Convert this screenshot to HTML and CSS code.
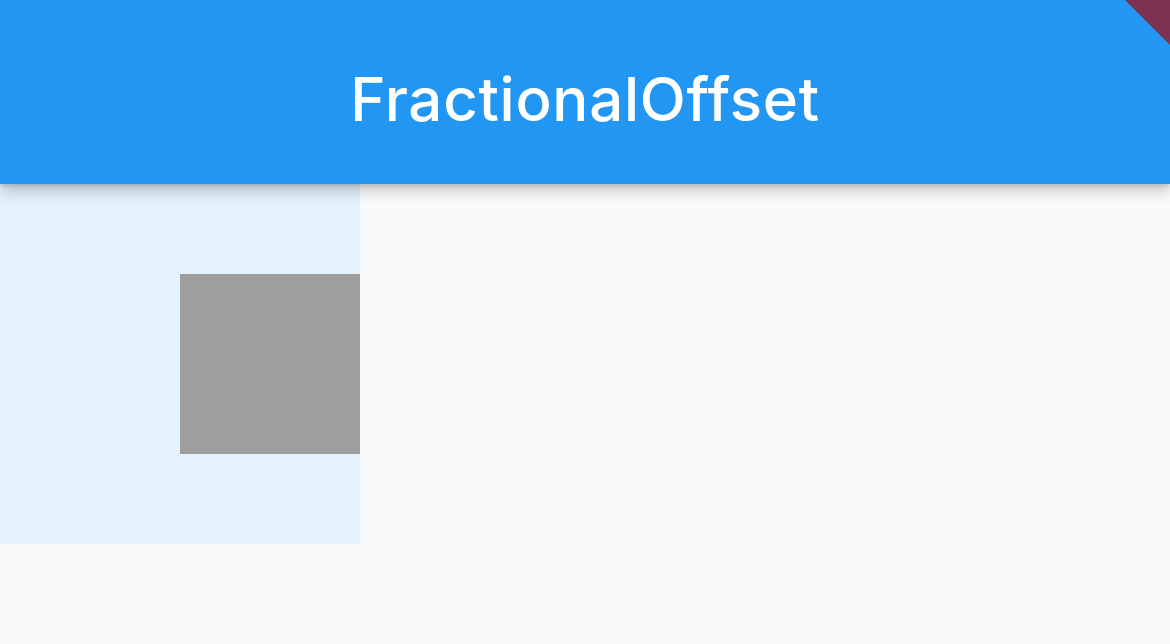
FILE: index.html
```html
<!DOCTYPE html>
<html>
<head>
<meta charset="utf-8">
<link rel="stylesheet" href="styles.css">
</head>
<body>
<header class="app-bar">
  <h1 class="title">FractionalOffset</h1>
</header>
<main class="content">
  <div class="frame">
    <div class="square"></div>
  </div>
</main>
<div class="debug-banner"></div>
</body>
</html>
```

FILE: styles.css
```css
html, body {
  margin: 0;
  padding: 0;
}
body {
  width: 1170px;
  height: 644px;
  overflow: hidden;
  background: #FAFAFA;
  font-family: Inter, "Noto Sans", sans-serif;
  position: relative;
}
.app-bar {
  position: relative;
  z-index: 1;
  box-sizing: border-box;
  height: 184px;
  padding-top: 14px;
  background: #2196F3;
  display: flex;
  align-items: center;
  justify-content: center;
  box-shadow: 0 8px 14px rgba(0,0,0,0.18), 0 2px 5px rgba(0,0,0,0.14);
}
.title {
  margin: 0;
  color: #fff;
  font-size: 60px;
  font-weight: 500;
  letter-spacing: 0.7px;
  line-height: 1;
}
.content {
  display: flex;
}
.frame {
  box-sizing: border-box;
  width: 360px;
  height: 360px;
  background: #E3F2FD;
  padding: 90px 0 0 180px;
}
.square {
  width: 180px;
  height: 180px;
  background: #9E9E9E;
}
.debug-banner {
  position: absolute;
  top: 0;
  right: 0;
  z-index: 2;
  width: 45px;
  height: 45px;
  background: #7c3352;
  clip-path: polygon(0 0, 100% 0, 100% 100%);
}
```
